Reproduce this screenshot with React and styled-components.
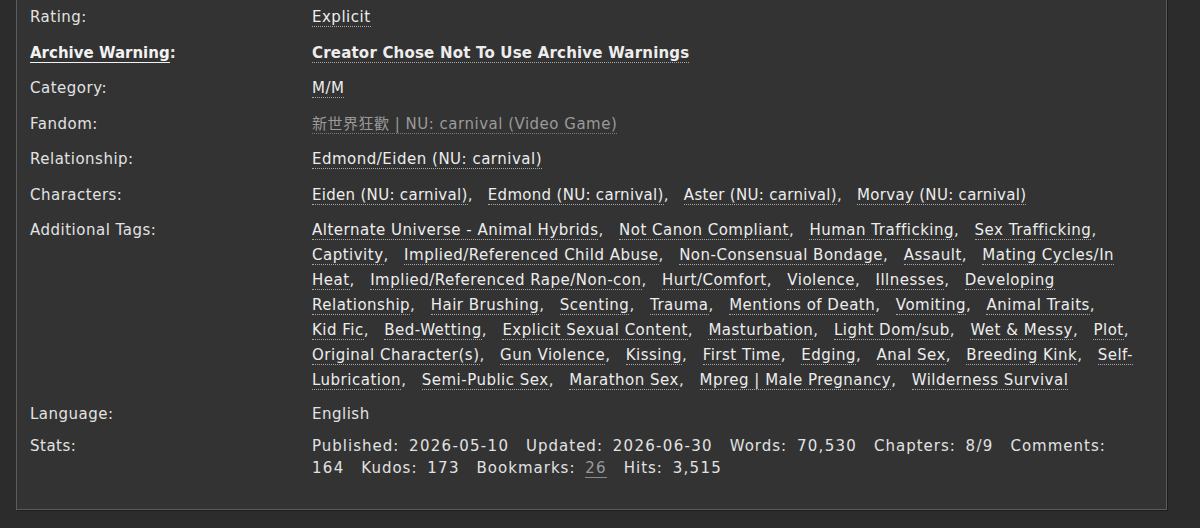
import React from 'react';
import styled, { createGlobalStyle } from 'styled-components';

const GlobalStyle = createGlobalStyle`
  html, body {
    margin: 0;
    padding: 0;
    background: #2c2c2c;
  }
  body {
    font-family: 'DejaVu Sans', 'Noto Sans CJK TC', sans-serif;
    font-size: 15px;
    letter-spacing: 0.5px;
    color: #dcdcdc;
  }
`;

const Page = styled.div`
  height: 528px;
  overflow: hidden;
  padding: 0 33px 0 16px;
`;

const Panel = styled.dl`
  margin: -12px 0 0;
  background: #333;
  border: 1px solid #5c5c5c;
  box-shadow: 1px 1px 0 #1c1c1c;
  padding: 16px 0 30px 13px;
  display: grid;
  grid-template-columns: 282px 821px;
  align-items: start;
`;

const Label = styled.dt`
  margin: 0 0 ${p => p.$gap ?? 10.5}px;
  line-height: ${p => p.$lh ?? 25}px;
  font-weight: ${p => (p.$bold ? 700 : 400)};
  letter-spacing: ${p => (p.$bold ? 0 : 0.5)}px;
  color: #e2e2e2;
`;

const HelpLink = styled.a`
  color: #f2f2f2;
  text-decoration: none;
  border-bottom: 1px solid #f2f2f2;
`;

const Value = styled.dd`
  margin: 0 0 ${p => p.$gap ?? 10.5}px;
  line-height: ${p => p.$lh ?? 25}px;
  font-weight: ${p => (p.$bold ? 700 : 400)};
  letter-spacing: ${p => p.$ls ?? (p.$bold ? 0.2 : 0.5)}px;
  color: #e2e2e2;
`;

const StatsValue = styled(Value)`
  letter-spacing: 1px;
`;

const TagList = styled.ul`
  list-style: none;
  margin: 0;
  padding: 0;
  display: inline;
`;

const Tag = styled.li`
  display: inline;
  &:not(:last-child)::after {
    content: ',';
  }
`;

/* wide separator space: hangs at line end instead of forcing a wrap */
const Sep = styled.span`
  word-spacing: 10px;
`;

const TagLink = styled.a`
  color: ${p => (p.$muted ? '#9a9a9a' : '#ededed')};
  text-decoration: none;
  border-bottom: 1px dotted ${p => (p.$muted ? '#7a7a7a' : '#a8a8a8')};
`;

const StatLabel = styled.span`
  margin-right: 4px;
`;

const StatValue = styled.span`
  letter-spacing: 1.3px;
  margin-right: 11px;
`;

const StatLink = styled.a`
  color: #9a9a9a;
  text-decoration: none;
  border-bottom: 1px solid #8a8a8a;
`;

const Tags = ({ items, muted }) => (
  <TagList>
    {items.map((t, i) => (
      <React.Fragment key={t}>
        <Tag><TagLink href="#" $muted={muted}>{t}</TagLink></Tag>
        {i < items.length - 1 ? <Sep> </Sep> : null}
      </React.Fragment>
    ))}
  </TagList>
);

const characters = [
  'Eiden (NU: carnival)',
  'Edmond (NU: carnival)',
  'Aster (NU: carnival)',
  'Morvay (NU: carnival)',
];

const freeforms = [
  'Alternate Universe - Animal Hybrids',
  'Not Canon Compliant',
  'Human Trafficking',
  'Sex Trafficking',
  'Captivity',
  'Implied/Referenced Child Abuse',
  'Non-Consensual Bondage',
  'Assault',
  'Mating Cycles/In Heat',
  'Implied/Referenced Rape/Non-con',
  'Hurt/Comfort',
  'Violence',
  'Illnesses',
  'Developing Relationship',
  'Hair Brushing',
  'Scenting',
  'Trauma',
  'Mentions of Death',
  'Vomiting',
  'Animal Traits',
  'Kid Fic',
  'Bed-Wetting',
  'Explicit Sexual Content',
  'Masturbation',
  'Light Dom/sub',
  'Wet & Messy',
  'Plot',
  'Original Character(s)',
  'Gun Violence',
  'Kissing',
  'First Time',
  'Edging',
  'Anal Sex',
  'Breeding Kink',
  'Self-Lubrication',
  'Semi-Public Sex',
  'Marathon Sex',
  'Mpreg | Male Pregnancy',
  'Wilderness Survival',
];

const stats = [
  ['Published:', '2026-05-10'],
  ['Updated:', '2026-06-30'],
  ['Words:', '70,530'],
  ['Chapters:', '8/9'],
  ['Comments:', '164'],
  ['Kudos:', '173'],
  ['Bookmarks:', '26', true],
  ['Hits:', '3,515'],
];

export default function App() {
  return (
    <>
      <GlobalStyle />
      <Page>
        <Panel>
          <Label>Rating:</Label>
          <Value><Tags items={['Explicit']} /></Value>

          <Label $bold><HelpLink href="#">Archive Warning</HelpLink>:</Label>
          <Value $bold><Tags items={['Creator Chose Not To Use Archive Warnings']} /></Value>

          <Label>Category:</Label>
          <Value><Tags items={['M/M']} /></Value>

          <Label>Fandom:</Label>
          <Value><Tags items={['新世界狂歡 | NU: carnival (Video Game)']} muted /></Value>

          <Label>Relationship:</Label>
          <Value><Tags items={['Edmond/Eiden (NU: carnival)']} /></Value>

          <Label>Characters:</Label>
          <Value $ls={0.3}><Tags items={characters} /></Value>

          <Label $gap={9}>Additional Tags:</Label>
          <Value $gap={9}><Tags items={freeforms} /></Value>

          <Label $gap={8}>Language:</Label>
          <Value $gap={8}>English</Value>

          <Label $lh={22} $gap={0}>Stats:</Label>
          <StatsValue $lh={22} $gap={0}>
            {stats.map(([label, value, link]) => (
              <React.Fragment key={label}>
                <StatLabel>{label}</StatLabel>{' '}
                <StatValue>{link ? <StatLink href="#">{value}</StatLink> : value}</StatValue>{' '}
              </React.Fragment>
            ))}
          </StatsValue>
        </Panel>
      </Page>
    </>
  );
}
